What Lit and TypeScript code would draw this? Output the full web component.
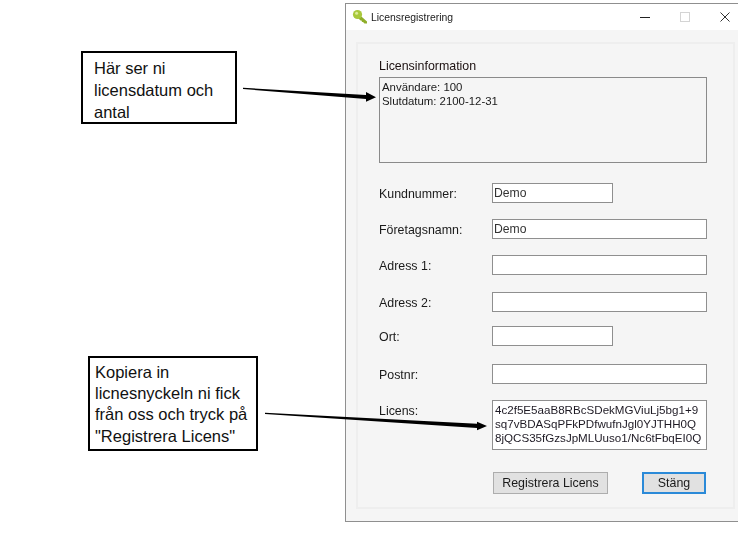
import { LitElement, html, css, svg } from "lit";
import { customElement } from "lit/decorators.js";

interface Row { label: string; value?: string; short?: boolean; gap: number }

const rows: Row[] = [
  { label: "Kundnummer:", value: "Demo", short: true, gap: 20 },
  { label: "Företagsnamn:", value: "Demo", gap: 16 },
  { label: "Adress 1:", gap: 16 },
  { label: "Adress 2:", gap: 17 },
  { label: "Ort:", short: true, gap: 14 },
  { label: "Postnr:", gap: 18 },
];

@customElement("app-root")
export class AppRoot extends LitElement {
  static styles = css`
    :host {
      display: block;
      position: relative;
      width: 738px;
      height: 549px;
      overflow: hidden;
      background: #fff;
      font-family: "Liberation Sans", Arial, sans-serif;
      color: #1a1a1a;
    }
    .page {
      box-sizing: border-box;
      width: 738px;
      height: 549px;
      padding: 3px 0 0 345px;
      filter: blur(0.35px);
    }
    .window {
      box-sizing: border-box;
      width: 393px;
      height: 519px;
      border: 1px solid #8f8f8f;
      border-right: none;
      background: #f5f5f5;
      display: flex;
      flex-direction: column;
    }
    .titlebar {
      height: 26px;
      flex: none;
      background: #fff;
      display: flex;
      align-items: center;
      padding-left: 6px;
      font-size: 10.4px;
    }
    .titlebar .key { margin-right: 3px; }
    .title { flex: 1; }
    .controls { display: flex; align-items: center; margin-right: -7px; }
    .ctl { width: 40px; height: 26px; display: flex; align-items: center; justify-content: center; }
    .group {
      box-sizing: border-box;
      margin: 12px 0 0 10px;
      width: 379px;
      height: 467px;
      border: 2px solid #eeeeee;
      padding: 15px 0 0 21px;
      font-size: 12.4px;
    }
    .info-label { height: 18px; line-height: 14px; color: #1c1010; }
    .info {
      box-sizing: border-box;
      width: 328px;
      height: 86px;
      border: 1px solid #8a8a8a;
      padding: 2px 2px;
      line-height: 14px;
      font-size: 11.4px;
    }
    .row { display: flex; align-items: center; }
    .label { width: 113px; flex: none; padding-top: 2px; }
    .input {
      box-sizing: border-box;
      width: 215px;
      height: 20px;
      background: #fff;
      border: 1px solid #8f8f8f;
      padding-left: 1px;
      line-height: 18px;
      font-size: 12.2px;
      color: #333;
    }
    .input.short { width: 121px; }
    .licens { align-items: flex-start; margin-top: 16px; }
    .licens .label { padding-top: 4px; }
    .area {
      box-sizing: border-box;
      width: 215px;
      height: 50px;
      background: #fff;
      border: 1px solid #8f8f8f;
      padding: 2px 0 0 2px;
      font-size: 11.6px;
      line-height: 14px;
      white-space: nowrap;
      overflow: hidden;
      color: #1e1a24;
    }
    .buttons { display: flex; margin: 22px 0 0 114px; }
    .btn {
      box-sizing: border-box;
      height: 22px;
      background: #e1e1e1;
      border: 1px solid #adadad;
      display: flex;
      align-items: center;
      justify-content: center;
      font-size: 12.4px;
    }
    .reg { width: 115px; }
    .close { width: 64px; margin-left: 34px; border: 2px solid #2b8ad8; }
    .callout {
      position: absolute;
      box-sizing: border-box;
      background: #fff;
      border: 2px solid #000;
      font-size: 16.5px;
      color: #111;
    }
    .c1 { left: 81px; top: 51px; width: 156px; height: 73px; padding: 4px 0 0 11px; line-height: 22px; }
    .c2 { left: 88px; top: 356px; width: 170px; height: 95px; padding: 4px 0 0 5px; line-height: 21.2px; }
    .arrows { position: absolute; left: 0; top: 0; }
  `;

  private keyIcon() {
    return svg`<svg class="key" width="16" height="16" viewBox="0 0 16 16">
      <path d="M6.5 5 L15 12.5 L15 14.5 L12.5 14.5 L11 13 L10 13 L9.5 11.5 L8.5 11.5 L4.5 7.5 Z" fill="#8fae2a"/>
      <circle cx="5.5" cy="5.5" r="4.6" fill="#a9c83c"/>
      <circle cx="4.6" cy="4.2" r="1.5" fill="#dcec9a"/>
    </svg>`;
  }

  render() {
    return html`
      <div class="page">
        <div class="window">
          <div class="titlebar">
            ${this.keyIcon()}
            <span class="title">Licensregistrering</span>
            <div class="controls">
              <div class="ctl"><svg width="10" height="10" viewBox="0 0 10 10"><path d="M0 5.5H10" stroke="#222" stroke-width="1"/></svg></div>
              <div class="ctl"><svg width="10" height="10" viewBox="0 0 10 10"><rect x=".5" y=".5" width="9" height="9" fill="none" stroke="#d4d4d4"/></svg></div>
              <div class="ctl"><svg width="10" height="10" viewBox="0 0 10 10"><path d="M.5 .5L9.5 9.5M9.5 .5L.5 9.5" stroke="#333" stroke-width="1"/></svg></div>
            </div>
          </div>
          <div class="group">
            <div class="info-label">Licensinformation</div>
            <div class="info">Användare: 100<br />Slutdatum: 2100-12-31</div>
            ${rows.map(
              (r) => html`<div class="row" style="margin-top:${r.gap}px">
                <span class="label">${r.label}</span>
                <div class="input ${r.short ? "short" : ""}">${r.value ?? ""}</div>
              </div>`
            )}
            <div class="row licens">
              <span class="label">Licens:</span>
              <div class="area">4c2f5E5aaB8RBcSDekMGViuLj5bg1+9<br />sq7vBDASqPFkPDfwufnJgl0YJTHH0Q<br />8jQCS35fGzsJpMLUuso1/Nc6tFbqEI0Q</div>
            </div>
            <div class="buttons">
              <div class="btn reg">Registrera Licens</div>
              <div class="btn close">Stäng</div>
            </div>
          </div>
        </div>
        <div class="callout c1">Här ser ni<br />licensdatum och<br />antal</div>
        <div class="callout c2">Kopiera in<br />licnesnyckeln ni fick<br />från oss och tryck på<br />"Registrera Licens"</div>
        <svg class="arrows" width="738" height="549" viewBox="0 0 738 549">
          <path d="M243 87.8 L243 89 L366 99 L366 101.7 L376 97.3 L366 92 L366 95 Z" fill="#000"/>
          <path d="M265 412.8 L265 414 L477 428 L477 430.3 L487 426 L477 421.7 L477 423.8 Z" fill="#000"/>
        </svg>
      </div>
    `;
  }
}
